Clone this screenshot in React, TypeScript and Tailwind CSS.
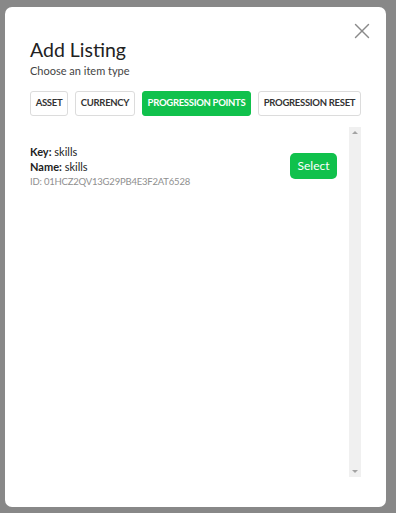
import { X } from 'lucide-react'

const TYPES = [
  { label: 'ASSET', active: false, w: 'w-[38px]' },
  { label: 'CURRENCY', active: false, w: 'w-[60px]' },
  { label: 'PROGRESSION POINTS', active: true, w: 'w-[109px]' },
  { label: 'PROGRESSION RESET', active: false, w: 'w-[103px]' },
]

export default function App() {
  return (
    <div
      className="w-[396px] h-[513px] bg-[#888888] pt-[7px] pl-[5px]"
      style={{ fontFamily: 'Lato, "Open Sans", sans-serif' }}
    >
      <div className="relative w-[381px] h-[500px] bg-white rounded-[7px] flex flex-col px-[25px] pt-[31px] pb-[30px]">
        {/* Close */}
        <button className="absolute top-[11px] right-[11px]">
          <X className="w-[26px] h-[26px] text-[#8a8a8a]" strokeWidth={1.3} />
        </button>

        <h2 className="text-[19.5px] leading-[24px] text-[#222]">Add Listing</h2>
        <p className="text-[11px] text-[#444] mt-[1px]">Choose an item type</p>

        {/* Type buttons */}
        <div className="flex gap-[7px] mt-[11px]">
          {TYPES.map((t) => (
            <button
              key={t.label}
              className={`${t.w} shrink-0 whitespace-nowrap h-[25px] flex items-center justify-center rounded-[3px] text-[9.5px] font-bold tracking-[-0.3px] ${
                t.active
                  ? 'bg-[#10c14c] text-white border border-[#10c14c]'
                  : 'bg-white text-[#333] border border-[#dcdcdc]'
              }`}
            >
              {t.label}
            </button>
          ))}
        </div>

        {/* List */}
        <div className="flex flex-1 mt-[11px]">
          <div className="flex-1 pt-[17px]">
            <div className="flex items-center justify-between pr-[12px]">
              <div className="flex flex-col text-[11px] text-[#222]">
                <p className="leading-[15px]">
                  <span className="font-bold">Key:</span> skills
                </p>
                <p className="leading-[15px]">
                  <span className="font-bold">Name:</span> skills
                </p>
                <p className="text-[9.5px] text-[#8f8f8f] leading-[15px] tracking-[-0.2px]">
                  ID: 01HCZ2QV13G29PB4E3F2AT6528
                </p>
              </div>
              <button className="w-[47px] h-[26px] rounded-[5px] bg-[#10c14c] text-white text-[12px]">
                Select
              </button>
            </div>
          </div>

          {/* Scrollbar */}
          <div className="w-[12px] bg-[#f0f0f0] flex flex-col justify-between items-center py-[4px]">
            <div className="w-0 h-0 border-l-[3px] border-r-[3px] border-b-[3px] border-l-transparent border-r-transparent border-b-[#a3a3a3]" />
            <div className="w-0 h-0 border-l-[3px] border-r-[3px] border-t-[3px] border-l-transparent border-r-transparent border-t-[#a3a3a3]" />
          </div>
        </div>
      </div>
    </div>
  )
}
